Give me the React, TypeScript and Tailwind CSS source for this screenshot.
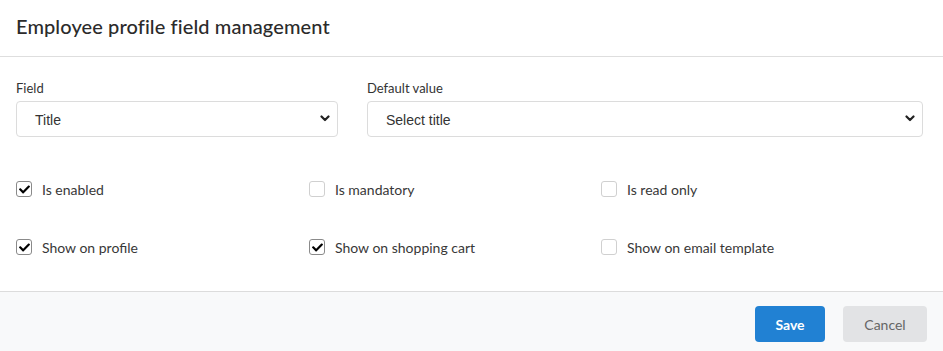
const checks = [
  { label: 'Is enabled', on: true },
  { label: 'Is mandatory', on: false },
  { label: 'Is read only', on: false },
  { label: 'Show on profile', on: true },
  { label: 'Show on shopping cart', on: true },
  { label: 'Show on email template', on: false },
];

function Chevron() {
  return (
    <svg width="10" height="7" viewBox="0 0 10 7" className="text-[#222]">
      <path d="M1.5 1.5 L5 5 L8.5 1.5" fill="none" stroke="currentColor" strokeWidth="2.2" strokeLinecap="round" strokeLinejoin="round" />
    </svg>
  );
}

function Tick() {
  return (
    <svg viewBox="0 0 512 512" className="size-[11px] text-black">
      <path
        fill="currentColor"
        d="M173.9 439.4l-166.4-166.4c-10-10-10-26.2 0-36.2l36.2-36.2c10-10 26.2-10 36.2 0L192 312.7 432.1 72.6c10-10 26.2-10 36.2 0l36.2 36.2c10 10 10 26.2 0 36.2l-294.4 294.4c-10 10-26.2 10-36.2 0z"
      />
    </svg>
  );
}

function FakeSelect({ value, className }: { value: string; className?: string }) {
  return (
    <div
      className={`flex h-9 items-center justify-between rounded border border-[#dcdcdc] bg-white pl-[18px] pr-[7px] font-['Liberation_Sans',Arial,sans-serif] text-[14px] text-[#333] ${className ?? ''}`}
    >
      <span className="pt-[3px]">{value}</span>
      <Chevron />
    </div>
  );
}

function CheckItem({ label, on }: { label: string; on: boolean }) {
  return (
    <label className="flex items-center gap-2.5 text-[14px] text-[#383838]">
      <span
        className={`flex size-4 items-center justify-center rounded-[3px] border bg-white ${on ? 'border-[#8a8a8a]' : 'border-[#d0d0d0]'}`}
      >
        {on && <Tick />}
      </span>
      {label}
    </label>
  );
}

export default function App() {
  return (
    <div className="flex h-[351px] w-[943px] flex-col bg-white font-['Lato',sans-serif]">
      <div className="flex h-[57px] items-center border-b border-[#dedede] px-4 pb-1">
        <h2 className="text-[20px] font-medium tracking-[0.1px] text-[#2b2b2b]">Employee profile field management</h2>
      </div>

      <div className="flex-1 pl-4 pr-5 pt-[22px]">
        <div className="flex gap-[29px]">
          <div className="w-[322px]">
            <div className="mb-[2px] text-[13px] text-[#333]">Field</div>
            <FakeSelect value="Title" />
          </div>
          <div className="flex-1">
            <div className="mb-[2px] text-[13px] text-[#333]">Default value</div>
            <FakeSelect value="Select title" />
          </div>
        </div>

        <div className="mt-[42px] grid grid-cols-[293px_292px_1fr] gap-y-[37px]">
          {checks.map((c) => (
            <CheckItem key={c.label} label={c.label} on={c.on} />
          ))}
        </div>
      </div>

      <div className="flex h-[60px] items-start justify-end gap-[18px] border-t border-[#dcdcdc] bg-[#f8f9fa] pr-4 pt-[14px]">
        <button type="button" className="h-9 w-[70px] rounded bg-[#2181d3] text-[14px] font-bold text-white">
          Save
        </button>
        <button type="button" className="h-9 w-[84px] rounded bg-[#e2e3e5] text-[14px] text-[#666]">
          Cancel
        </button>
      </div>
    </div>
  );
}
